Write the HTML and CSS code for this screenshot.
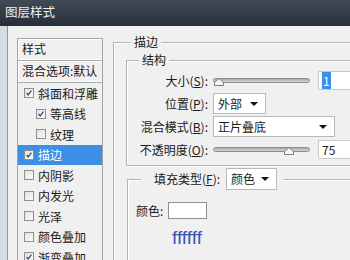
FILE: index.html
```html
<!DOCTYPE html>
<html lang="zh-CN">
<head>
  <meta charset="UTF-8">
  <title>图层样式</title>
  <link rel="stylesheet" href="styles.css">
</head>
<body>
  <div class="window">
    <div class="titlebar">图层样式</div>
    <div class="frame">
      <div class="frame-edge"></div>
      <div class="content">

        <div class="style-list">
          <div class="list-head">样式</div>
          <div class="list-head">混合选项:默认</div>
          <div class="list-item"><span class="cb"><svg viewBox="0 0 10 10"><path d="M2 5 L4 7.5 L8 2"/></svg></span>斜面和浮雕</div>
          <div class="list-item sub"><span class="cb"><svg viewBox="0 0 10 10"><path d="M2 5 L4 7.5 L8 2"/></svg></span>等高线</div>
          <div class="list-item sub"><span class="cb"></span>纹理</div>
          <div class="list-item active"><span class="cb"><svg viewBox="0 0 10 10"><path d="M2 5 L4 7.5 L8 2"/></svg></span>描边</div>
          <div class="list-item"><span class="cb"></span>内阴影</div>
          <div class="list-item"><span class="cb"></span>内发光</div>
          <div class="list-item"><span class="cb"></span>光泽</div>
          <div class="list-item"><span class="cb"></span>颜色叠加</div>
          <div class="list-item"><span class="cb"><svg viewBox="0 0 10 10"><path d="M2 5 L4 7.5 L8 2"/></svg></span>渐变叠加</div>
        </div>

        <div class="group outer">
          <span class="group-title">描边</span>

          <div class="group inner">
            <span class="group-title">结构</span>

            <div class="field-row">
              <span class="field-label">大小(<u>S</u>):</span>
              <div class="slider">
                <span class="thumb" style="left: 0px"><svg viewBox="0 0 10 8"><path d="M0.5 7.5 V4.5 L5 0.5 L9.5 4.5 V7.5 Z"/></svg></span>
              </div>
              <div class="num"><span class="sel">1</span></div>
            </div>

            <div class="field-row">
              <span class="field-label">位置(<u>P</u>):</span>
              <div class="select pos">外部<i class="arrow"></i></div>
            </div>

            <div class="field-row">
              <span class="field-label">混合模式(<u>B</u>):</span>
              <div class="select mode">正片叠底<i class="arrow"></i></div>
            </div>

            <div class="field-row">
              <span class="field-label">不透明度(<u>O</u>):</span>
              <div class="slider">
                <span class="thumb" style="left: 70px"><svg viewBox="0 0 10 8"><path d="M0.5 7.5 V4.5 L5 0.5 L9.5 4.5 V7.5 Z"/></svg></span>
              </div>
              <div class="num">75</div>
            </div>
          </div>

          <div class="group fill">
            <div class="group-title fill-title">
              <span>填充类型(<u>F</u>):</span>
              <div class="select kind">颜色<i class="arrow"></i></div>
            </div>
            <div class="color-row">
              <span>颜色:</span>
              <span class="swatch"></span>
            </div>
            <div class="hex">ffffff</div>
          </div>
        </div>

      </div>
    </div>
  </div>
</body>
</html>
```

FILE: styles.css
```css
:root {
  --bg: #f0f0f0;
  --text: #1a1a1a;
  --line: #b4b4b4;
  --select: #3d8ee6;
}

* {
  box-sizing: border-box;
  margin: 0;
  padding: 0;
}

body {
  width: 350px;
  height: 260px;
  overflow: hidden;
  background: var(--bg);
  color: var(--text);
  font-family: "Noto Sans CJK SC", "Noto Sans", sans-serif;
  font-size: 12px;
}

u {
  text-decoration: underline;
  text-underline-offset: 1px;
}

.window {
  display: flex;
  flex-direction: column;
  height: 260px;
}

.titlebar {
  height: 26px;
  flex-shrink: 0;
  line-height: 24px;
  padding-left: 5px;
  font-size: 12.5px;
  color: #eef1f4;
  background: linear-gradient(#414b58, #262e38);
}

.frame {
  flex: 1;
  display: flex;
  min-height: 0;
}

.frame-edge {
  width: 8px;
  flex-shrink: 0;
  background: #d5dce4;
  border-right: 1px solid #8d98a5;
}

.content {
  flex: 1;
  display: flex;
  align-items: flex-start;
  padding: 12px 0 0 9px;
  overflow: hidden;
}

/* left style list */
.style-list {
  width: 86px;
  flex-shrink: 0;
  border: 1px solid #a3a3a3;
  background: var(--bg);
}

.list-head {
  height: 22px;
  line-height: 20px;
  padding-left: 4px;
  border-bottom: 1px solid #a9a9a9;
  box-shadow: inset 0 -1px 0 #fff, inset 1px 1px 0 #fff;
  white-space: nowrap;
}

.list-item {
  display: flex;
  align-items: center;
  height: 20.5px;
  padding-left: 6px;
  white-space: nowrap;
}

.list-item.sub {
  padding-left: 18px;
}

.list-item.active {
  background: var(--select);
  color: #fff;
}

.cb {
  width: 10px;
  height: 10px;
  margin-right: 4px;
  flex-shrink: 0;
  border: 1px solid #8e8f8f;
  background: linear-gradient(135deg, #e2e2e2, #fbfbfb);
}

.cb svg {
  display: block;
  width: 8px;
  height: 8px;
  fill: none;
  stroke: #3a4c7a;
  stroke-width: 1.6;
}

/* group boxes */
.group {
  position: relative;
  border: 1px solid var(--line);
  box-shadow: inset 1px 1px 0 #fff, 1px 1px 0 #fff;
}

.group-title {
  position: absolute;
  top: -9px;
  padding: 0 3px;
  line-height: 16px;
  background: var(--bg);
}

.outer {
  width: 260px;
  height: 260px;
  margin: 4px 0 0 10px;
  flex-shrink: 0;
  padding: 17px 0 0 12px;
}

.outer > .group-title {
  left: 17px;
}

.inner {
  padding: 8px 0 4px 0;
}

.inner > .group-title {
  left: 12px;
}

.field-row {
  display: flex;
  align-items: center;
  height: 23px;
}

.field-label {
  width: 82px;
  text-align: right;
  padding-right: 1px;
  white-space: nowrap;
}

.slider {
  position: relative;
  width: 97px;
  height: 5px;
  margin-left: 4px;
  border: 1px solid #8c8c8c;
  border-radius: 3px;
  background: linear-gradient(#a9a9a9, #d6d6d6);
}

.thumb {
  position: absolute;
  top: -1px;
  width: 10px;
  height: 8px;
}

.thumb svg {
  display: block;
  width: 10px;
  height: 8px;
  fill: #f6f6f6;
  stroke: #7b7b7b;
  stroke-width: 1;
}

.num {
  width: 40px;
  height: 19px;
  margin-left: 8px;
  padding-left: 3px;
  line-height: 17px;
  background: #fff;
  border: 1px solid #c5c9d0;
  border-right: none;
}

.sel {
  background: var(--select);
  color: #fff;
  padding: 0 1px;
}

.select {
  position: relative;
  display: flex;
  align-items: center;
  height: 21px;
  margin-left: 4px;
  padding-left: 4px;
  background: #fff;
  border: 1px solid #b9b9b9;
  white-space: nowrap;
}

.select.pos {
  width: 53px;
}

.select.mode {
  width: 122px;
}

.arrow {
  position: absolute;
  right: 7px;
  top: 8px;
  width: 0;
  height: 0;
  border-left: 4px solid transparent;
  border-right: 4px solid transparent;
  border-top: 4px solid #111;
}

/* fill type */
.fill {
  margin-top: 13px;
  margin-left: 1px;
  height: 120px;
  padding: 22px 0 0 8px;
}

.fill-title {
  top: -12px;
  left: 13px;
  display: flex;
  align-items: center;
  padding: 0 7px 0 13px;
}

.select.kind {
  width: 51px;
  height: 22px;
  margin-left: 6px;
}

.color-row {
  display: flex;
  align-items: center;
  gap: 5px;
  height: 17px;
}

.swatch {
  width: 39px;
  height: 17px;
  background: #fff;
  border: 1px solid #8f8f8f;
}

.hex {
  margin: 9px 0 0 36px;
  font-family: "Liberation Sans", sans-serif;
  font-size: 19px;
  line-height: 20px;
  color: #3556b5;
}
```
